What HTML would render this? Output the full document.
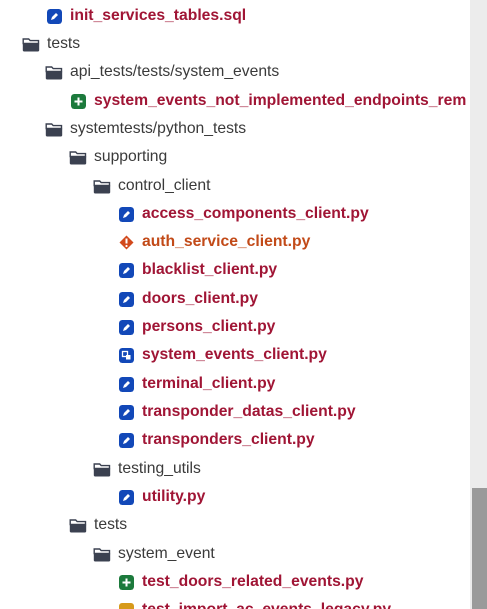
<!DOCTYPE html>
<html><head><meta charset="utf-8"><style>
html,body{margin:0;width:487px;height:609px;overflow:hidden}
body{background:#fff;font-family:"Liberation Sans",sans-serif;position:relative}
.r{position:absolute;height:20px;line-height:20px;white-space:nowrap;font-size:15.7px}
.f{color:#a01535;font-weight:bold}
.d{color:#3a3a3a}
.o{color:#c24a18;font-weight:bold}
.i{position:absolute;left:-23px;top:3px;width:15px;height:15px;border-radius:3px}
.fd{position:absolute;left:-25px;top:3px;width:18px;height:15px}
.sb{position:absolute;left:470px;top:0;width:17px;height:609px;background:#ececec}
.th{position:absolute;left:472px;top:488px;width:15px;height:121px;background:#9a9a9a}
</style></head><body>
<svg width="0" height="0" style="position:absolute"><defs>
<symbol id="fo" viewBox="0 0 18 15"><path d="M1.2 3V2h5.5l1.5 1.6H16.5V6.5H1.2z" fill="none" stroke="#3b4150" stroke-width="1.4"/><path d="M0.8 6.5h16.4v6.8a1.2 1.2 0 0 1-1.2 1.2H2a1.2 1.2 0 0 1-1.2-1.2z" fill="#3b4150"/></symbol>
<symbol id="ed" viewBox="0 0 15 15"><rect width="15" height="15" rx="3" fill="#1248b8"/><path d="M4 11l1-3 4-4 2 2-4 4z" fill="#fff"/></symbol>
<symbol id="ad" viewBox="0 0 15 15"><rect width="15" height="15" rx="3" fill="#1c7a3c"/><path d="M7.5 3.5v8M3.5 7.5h8" stroke="#fff" stroke-width="2"/></symbol>
<symbol id="er" viewBox="0 0 15 15"><path d="M7.5 0.5L14.5 7.5 7.5 14.5 0.5 7.5z" fill="#d2491c"/><path d="M7.5 3.5v5" stroke="#fff" stroke-width="2"/><circle cx="7.5" cy="11" r="1.1" fill="#fff"/></symbol>
<symbol id="rn" viewBox="0 0 15 15"><rect width="15" height="15" rx="3" fill="#1248b8"/><rect x="3.5" y="3.5" width="5" height="5" fill="none" stroke="#fff" stroke-width="1.3"/><rect x="7" y="7" width="4.5" height="4.5" fill="#fff"/></symbol>
</defs></svg>
<div class="r f" style="left:70px;top:6px"><svg class="i" viewBox="0 0 15 15"><use href="#ed"/></svg>init_services_tables.sql</div>
<div class="r d" style="left:47px;top:34px"><svg class="fd" viewBox="0 0 18 15"><use href="#fo"/></svg>tests</div>
<div class="r d" style="left:70px;top:62px"><svg class="fd" viewBox="0 0 18 15"><use href="#fo"/></svg>api_tests/tests/system_events</div>
<div class="r f" style="left:94px;top:91px"><svg class="i" viewBox="0 0 15 15"><use href="#ad"/></svg>system_events_not_implemented_endpoints_rem</div>
<div class="r d" style="left:70px;top:119px"><svg class="fd" viewBox="0 0 18 15"><use href="#fo"/></svg>systemtests/python_tests</div>
<div class="r d" style="left:94px;top:147px"><svg class="fd" viewBox="0 0 18 15"><use href="#fo"/></svg>supporting</div>
<div class="r d" style="left:118px;top:176px"><svg class="fd" viewBox="0 0 18 15"><use href="#fo"/></svg>control_client</div>
<div class="r f" style="left:142px;top:204px"><svg class="i" viewBox="0 0 15 15"><use href="#ed"/></svg>access_components_client.py</div>
<div class="r o" style="left:142px;top:232px"><svg class="i" viewBox="0 0 15 15"><use href="#er"/></svg>auth_service_client.py</div>
<div class="r f" style="left:142px;top:260px"><svg class="i" viewBox="0 0 15 15"><use href="#ed"/></svg>blacklist_client.py</div>
<div class="r f" style="left:142px;top:289px"><svg class="i" viewBox="0 0 15 15"><use href="#ed"/></svg>doors_client.py</div>
<div class="r f" style="left:142px;top:317px"><svg class="i" viewBox="0 0 15 15"><use href="#ed"/></svg>persons_client.py</div>
<div class="r f" style="left:142px;top:345px"><svg class="i" viewBox="0 0 15 15"><use href="#rn"/></svg>system_events_client.py</div>
<div class="r f" style="left:142px;top:374px"><svg class="i" viewBox="0 0 15 15"><use href="#ed"/></svg>terminal_client.py</div>
<div class="r f" style="left:142px;top:402px"><svg class="i" viewBox="0 0 15 15"><use href="#ed"/></svg>transponder_datas_client.py</div>
<div class="r f" style="left:142px;top:430px"><svg class="i" viewBox="0 0 15 15"><use href="#ed"/></svg>transponders_client.py</div>
<div class="r d" style="left:118px;top:459px"><svg class="fd" viewBox="0 0 18 15"><use href="#fo"/></svg>testing_utils</div>
<div class="r f" style="left:142px;top:487px"><svg class="i" viewBox="0 0 15 15"><use href="#ed"/></svg>utility.py</div>
<div class="r d" style="left:94px;top:515px"><svg class="fd" viewBox="0 0 18 15"><use href="#fo"/></svg>tests</div>
<div class="r d" style="left:118px;top:544px"><svg class="fd" viewBox="0 0 18 15"><use href="#fo"/></svg>system_event</div>
<div class="r f" style="left:142px;top:572px"><svg class="i" viewBox="0 0 15 15"><use href="#ad"/></svg>test_doors_related_events.py</div>
<div class="r f" style="left:142px;top:600px"><div class="i" style="background:#d79a1a"></div>test_import_ac_events_legacy.py</div>
<div class="sb"></div><div class="th"></div>
</body></html>
